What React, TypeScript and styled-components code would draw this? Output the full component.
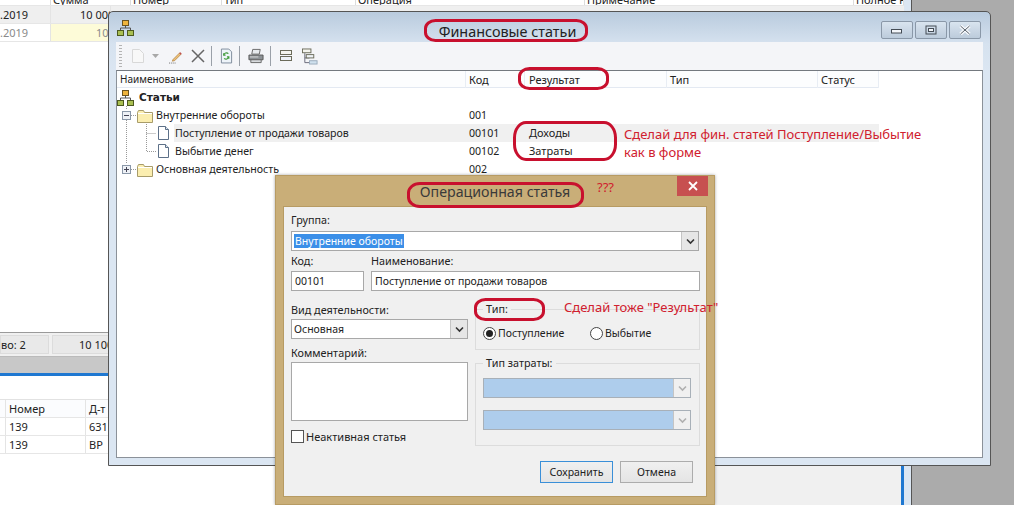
import styled, { createGlobalStyle } from "styled-components"

const GlobalStyle = createGlobalStyle`
  html, body {
    margin: 0;
    padding: 0;
    background: #ababab;
  }
  * {
    box-sizing: border-box;
  }
`

const UI_FONT = `"Noto Sans", "Open Sans", "Liberation Sans", sans-serif`
const RED = "#d0202e"

const Desktop = styled.div`
  position: relative;
  width: 1014px;
  height: 505px;
  overflow: hidden;
  background: #ababab;
  font-family: ${UI_FONT};
  font-size: 10.5px;
  color: #222;
`

/* the app behind the windows */
const BackWindow = styled.div`
  position: absolute;
  left: 0;
  top: 0;
  width: 912px;
  height: 505px;
  display: flex;
  background: #dbe6f2;
  border-right: 1px solid #555;
`

const BackContent = styled.div`
  width: 904px;
  display: flex;
  flex-direction: column;
  background: #fff;
`

const BackHeader = styled.div`
  height: 6px;
  display: flex;
  align-items: flex-end;
  overflow: hidden;
  border-bottom: 1px solid #e6e6e6;
`

const HeaderCell = styled.div<{ $w: number }>`
  flex: 0 0 ${(p) => p.$w}px;
  height: 5px;
  padding-left: 2px;
  display: flex;
  align-items: flex-end;
  font-size: 11px;
  line-height: 10px;
  white-space: nowrap;
  overflow: hidden;
  border-right: 1px solid #dcdcdc;
`

const BackCell = styled.div<{ $w: number; $bg?: string; $pad?: number; $muted?: boolean }>`
  flex: 0 0 ${(p) => p.$w}px;
  width: ${(p) => p.$w}px;
  padding-left: ${(p) => p.$pad ?? 3}px;
  line-height: 17px;
  font-size: 11px;
  white-space: nowrap;
  overflow: hidden;
  background: ${(p) => p.$bg || "transparent"};
  color: ${(p) => (p.$muted ? "#8a8a8a" : "#222")};
  border-right: 1px solid #e4e4e4;
`

const BackRow = styled.div<{ $bg?: string }>`
  height: 18px;
  display: flex;
  background: ${(p) => p.$bg || "#fff"};
  border-bottom: 1px solid #e6e6e6;
`

const BackSpacer = styled.div`
  height: 291px;
  border-bottom: 1px solid #9a9a9a;
`

const StatusStrip = styled.div`
  height: 24px;
  display: flex;
  gap: 3px;
  padding: 2px 0;
  background: #f0f0f0;
  border-bottom: 1px solid #bbb;
`

const StatusCell = styled.div<{ $w: number; $pad: number }>`
  width: ${(p) => p.$w}px;
  line-height: 18px;
  padding-left: ${(p) => p.$pad}px;
  background: #e9e9e9;
  border: 1px solid #dcdcdc;
  white-space: nowrap;
  overflow: hidden;
  font-size: 11px;
`

const GreyBar = styled.div`
  height: 19px;
  background: #c8c8c8;
  border-bottom: 3px solid #1f78d1;
`

const WhiteGap = styled.div`
  height: 24px;
  background: #fff;
  border-bottom: 1px solid #e2e2e2;
`

const LowerArea = styled.div`
  flex: 1;
  display: flex;
`

const LowerWhite = styled.div`
  width: 280px;
  background: #fff;
`

const LowerGrey = styled.div`
  flex: 1;
  background: #f0f0f0;
  border-right: 3px solid #1f78d1;
`

/* main window */
const MainWindow = styled.div`
  position: absolute;
  left: 108px;
  top: 11px;
  width: 883px;
  height: 455px;
  display: flex;
  flex-direction: column;
  padding: 0 7px 7px 7px;
  background: linear-gradient(#b9cbde 0, #d6e2ef 32px, #dbe6f2 60px);
  border: 1px solid #555;
  border-radius: 5px 5px 0 0;
  border-bottom-left-radius: 0;
`

const TitleBar = styled.div`
  position: relative;
  height: 30px;
  flex: none;
  display: flex;
  align-items: center;
  justify-content: center;
`

const AppIconSlot = styled.div`
  position: absolute;
  left: 1px;
  top: 7px;
  display: flex;
`

const WindowTitle = styled.div`
  font-size: 14.4px;
  color: #222;
  padding-top: 8px;
  padding-right: 84px;
`

const WinButtons = styled.div`
  position: absolute;
  right: 2px;
  top: 9px;
  display: flex;
  gap: 2px;
`

const WinButton = styled.div`
  flex: 0 0 32px;
  height: 18px;
  display: flex;
  align-items: center;
  justify-content: center;
  border: 1px solid #8a98a8;
  border-radius: 2px;
  background: linear-gradient(#d9e4ef, #bccbdb);
`

const Toolbar = styled.div`
  height: 28px;
  flex: none;
  display: flex;
  align-items: center;
  background: #f4f5f8;
  padding-left: 3px;
`

const Grip = styled.div`
  width: 3px;
  height: 22px;
  margin-right: 9px;
  background: repeating-linear-gradient(#b4b4b4 0 1px, transparent 1px 3px);
`

const ToolIcon = styled.div<{ $w: number; $gap?: number }>`
  width: ${(p) => p.$w}px;
  height: 18px;
  margin-right: ${(p) => p.$gap ?? 0}px;
  display: flex;
  align-items: center;
  justify-content: center;
  flex: none;
`

const ToolSep = styled.div`
  width: 1px;
  height: 20px;
  background: #9aa0a8;
  margin: 0 8px 0 6px;
  flex: none;
`

const TreePanel = styled.div`
  flex: 1;
  background: #fff;
  border: 1px solid #8b9199;
  border-top-color: #74797f;
  overflow: hidden;
`

const ColumnHeader = styled.div`
  width: 762px;
  height: 17px;
  display: grid;
  grid-template-columns: 349px 59px 142px 151px 61px;
  background: #fcfdfe;
  border-bottom: 1px solid #e3e9f2;
`

const HeadCell = styled.div`
  line-height: 17px;
  padding-left: 3px;
  font-size: 11px;
  color: #222;
  border-right: 1px solid #e8edf4;
`

const NameHead = styled(HeadCell)`
  font-size: 10px;
`

const ResultHead = styled(HeadCell)`
  padding-left: 4px;
`

const TreeRow = styled.div`
  width: 762px;
  height: 18px;
  display: grid;
  grid-template-columns: 349px 59px 142px 151px 61px;
  font-size: 10.6px;
  line-height: 18px;
`

const HighlightRow = styled(TreeRow)`
  background: linear-gradient(to right, transparent 57px, #f0f0f0 57px);
`

const NameCell = styled.div`
  display: flex;
  align-items: center;
  gap: 2px;
  white-space: nowrap;
`

const BoldName = styled.span`
  font-weight: 700;
  font-family: "DejaVu Sans", sans-serif;
  font-size: 10.5px;
  margin-left: 3px;
`

const CodeCell = styled.div`
  padding-left: 3px;
`

const ResultCell = styled.div`
  padding-left: 4px;
  font-size: 11px;
`

/* dialog */
const Dialog = styled.div`
  position: absolute;
  left: 275px;
  top: 175px;
  width: 440px;
  height: 330px;
  display: flex;
  flex-direction: column;
  background: #c9ae78;
  padding: 0 7px 7px 7px;
  box-shadow: 0 0 3px rgba(0, 0, 0, 0.35);
  border: 1px solid #b79b63;
`

const DialogTitle = styled.div`
  position: relative;
  height: 30px;
  flex: none;
  text-align: center;
  font-size: 14.2px;
  line-height: 31px;
  color: #3a3a3a;
`

const CloseBtn = styled.div`
  position: absolute;
  right: -1px;
  top: 0;
  width: 31px;
  height: 20px;
  background: #c75050;
  display: flex;
  align-items: center;
  justify-content: center;
`

const DialogBody = styled.div`
  flex: 1;
  display: flex;
  flex-direction: column;
  background: #f0f0f0;
  padding: 6px 6px 0 7px;
  border: 1px solid #b79b63;
`

const FieldLabel = styled.div`
  font-size: 10.8px;
  line-height: 14px;
  color: #222;
  white-space: nowrap;
`

const ComboBox = styled.div<{ $w?: number; $disabled?: boolean }>`
  width: ${(p) => (p.$w ? `${p.$w}px` : "100%")};
  height: 20px;
  flex: none;
  display: flex;
  background: ${(p) => (p.$disabled ? "#aecdec" : "#fff")};
  border: 1px solid ${(p) => (p.$disabled ? "#a8b0b8" : "#a8a8a8")};
`

const ComboValue = styled.div`
  flex: 1;
  line-height: 18px;
  padding-left: 2px;
  font-size: 10.5px;
`

const Selected = styled.span`
  background: #3b8fe8;
  color: #fff;
  padding: 0 1px;
`

const ComboArrow = styled.div<{ $disabled?: boolean }>`
  width: 17px;
  display: flex;
  align-items: center;
  justify-content: center;
  border-left: 1px solid #c4c4c4;
  background: ${(p) => (p.$disabled ? "#f0f0f0" : "#e6e6e6")};
`

const GroupField = styled.div`
  margin-top: 4px;
  padding-right: 1px;
`

const CodeRow = styled.div`
  display: flex;
  gap: 7px;
  margin-top: 3px;
`

const CodeField = styled.div<{ $w?: number }>`
  display: flex;
  flex-direction: column;
  gap: 3px;
  width: ${(p) => (p.$w ? `${p.$w}px` : "auto")};
  flex: ${(p) => (p.$w ? "none" : 1)};
`

const TextInput = styled.div`
  height: 20px;
  line-height: 18px;
  padding-left: 3px;
  background: #fff;
  border: 1px solid #a8a8a8;
  font-size: 10.5px;
`

const Columns = styled.div`
  display: grid;
  grid-template-columns: 177px 225px;
  column-gap: 7px;
  margin-top: 12px;
`

const LeftColumn = styled.div`
  display: flex;
  flex-direction: column;
`

const ComboGap = styled.div`
  margin-top: 2px;
`

const CommentLabel = styled(FieldLabel)`
  margin-top: 7px;
`

const RightColumn = styled.div`
  display: flex;
  flex-direction: column;
  gap: 7px;
`

const CommentBox = styled.div`
  height: 59px;
  margin-top: 2px;
  background: #fff;
  border: 1px solid #a8a8a8;
`

const CheckRow = styled.div`
  display: flex;
  align-items: center;
  gap: 2px;
  margin-top: 8px;
  font-size: 11px;
`

const CheckBox = styled.div`
  width: 13px;
  height: 13px;
  background: #fff;
  border: 1px solid #555;
`

const FieldSet = styled.fieldset<{ $h: number }>`
  margin: 0;
  padding: 0 8px 0 7px;
  height: ${(p) => p.$h}px;
  border: 1px solid #dcdcdc;
  min-width: 0;
`

const Legend = styled.legend`
  padding: 0 3px;
  font-size: 10.8px;
  line-height: 12px;
`

const RadioRow = styled.div`
  display: flex;
  align-items: center;
  margin-top: 11px;
`

const RadioItem = styled.div<{ $w: number }>`
  width: ${(p) => p.$w}px;
  display: flex;
  align-items: center;
  gap: 2px;
`

const Radio = styled.div<{ $checked?: boolean }>`
  width: 13px;
  height: 13px;
  display: flex;
  align-items: center;
  justify-content: center;
  border-radius: 50%;
  background: #fff;
  border: 1px solid #444;
  &::after {
    content: "";
    display: ${(p) => (p.$checked ? "block" : "none")};
    width: 7px;
    height: 7px;
    border-radius: 50%;
    background: #222;
  }
`

const ComboStack = styled.div`
  display: flex;
  flex-direction: column;
  gap: 12px;
  margin-top: 9px;
`

const ButtonRow = styled.div`
  display: flex;
  justify-content: flex-end;
  gap: 7px;
  margin-top: 15px;
  padding-right: 7px;
`

const DialogButton = styled.div<{ $primary?: boolean }>`
  width: 73px;
  height: 22px;
  line-height: 20px;
  text-align: center;
  font-size: 10.5px;
  background: linear-gradient(#f0f0f0, #e4e4e4);
  border: 1px solid ${(p) => (p.$primary ? "#3a8fd8" : "#acacac")};
`

/* red notes drawn over the screenshot */
const Ring = styled.div<{ $x: number; $y: number; $w: number; $h: number }>`
  position: absolute;
  left: ${(p) => p.$x}px;
  top: ${(p) => p.$y}px;
  width: ${(p) => p.$w}px;
  height: ${(p) => p.$h}px;
  border: 3px solid #c8102e;
  border-radius: ${(p) => Math.min(p.$h / 2, 13)}px / ${(p) => p.$h / 2.4}px;
  pointer-events: none;
`

const Note = styled.div<{ $x: number; $y: number }>`
  position: absolute;
  left: ${(p) => p.$x}px;
  top: ${(p) => p.$y}px;
  color: ${RED};
  font-size: 13px;
  line-height: 17px;
  white-space: nowrap;
`

const HierarchyIcon = () => (
  <svg width="17" height="17" viewBox="0 0 17 17">
    <path d="M8.5 6v3M3.5 11V9h10v2" fill="none" stroke="#555" />
    <rect x="5.5" y="1.5" width="6" height="5" fill="#efb43c" stroke="#6b5320" />
    <rect x="0.5" y="11.5" width="6" height="5" fill="#a9bf52" stroke="#4d5a20" />
    <rect x="10.5" y="11.5" width="6" height="5" fill="#a9bf52" stroke="#4d5a20" />
  </svg>
)

const Folder = () => (
  <>
    <path d="M20.5 6.5l1-2h5l1 2h8v10h-15z" fill="#fbeeb0" stroke="#a89c6a" />
    <path d="M21 7.5h14" stroke="#fff" />
  </>
)

const FolderGlyph = ({ open, last }: { open?: boolean; last?: boolean }) => (
  <svg width="37" height="18" viewBox="0 0 37 18">
    <path d={last ? "M9.5 0v4" : "M9.5 0v4M9.5 14v4"} stroke="#999" strokeDasharray="1 1" />
    <path d="M14 9.5h6" stroke="#999" strokeDasharray="1 1" />
    <rect x="5.5" y="5.5" width="8" height="8" fill="#eef1f6" stroke="#8a97a8" />
    <path d="M7 9.5h5" stroke="#445" />
    {!open && <path d="M9.5 7v5" stroke="#445" />}
    <Folder />
  </svg>
)

const DocGlyph = ({ last }: { last?: boolean }) => (
  <svg width="56" height="18" viewBox="0 0 56 18">
    <path d="M9.5 0v18" stroke="#999" strokeDasharray="1 1" />
    <path d={last ? "M29.5 0v9.5h10" : "M29.5 0v18M29.5 9.5h10"} fill="none" stroke="#999" strokeDasharray="1 1" />
    <path d="M41.5 2.5h7l3 3v10h-10z" fill="#fff" stroke="#5d7088" />
    <path d="M48.5 2.5v3h3" fill="#dce6f0" stroke="#5d7088" />
  </svg>
)

const ChevronDown = ({ color = "#333" }: { color?: string }) => (
  <svg width="9" height="7" viewBox="0 0 9 7">
    <path d="M1 1.5l3.5 3.5L8 1.5" fill="none" stroke={color} strokeWidth="1.6" />
  </svg>
)

export default function App() {
  return (
    <Desktop>
      <GlobalStyle />

      <BackWindow>
        <BackContent>
          <BackHeader>
            <HeaderCell $w={51}></HeaderCell>
            <HeaderCell $w={80}>Сумма</HeaderCell>
            <HeaderCell $w={91}>Номер</HeaderCell>
            <HeaderCell $w={134}>Тип</HeaderCell>
            <HeaderCell $w={229}>Операция</HeaderCell>
            <HeaderCell $w={269}>Примечание</HeaderCell>
            <HeaderCell $w={50}>Полное н</HeaderCell>
          </BackHeader>
          <BackRow $bg="#efefef">
            <BackCell $w={51} $pad={0}>.2019</BackCell>
            <BackCell $w={60} $pad={29}>10 000</BackCell>
          </BackRow>
          <BackRow>
            <BackCell $w={51} $pad={0} $muted>.2019</BackCell>
            <BackCell $w={60} $pad={45} $muted $bg="#fdfbd8">100</BackCell>
          </BackRow>
          <BackSpacer />
          <StatusStrip>
            <StatusCell $w={49} $pad={0}>во: 2</StatusCell>
            <StatusCell $w={70} $pad={26}>10 100</StatusCell>
          </StatusStrip>
          <GreyBar />
          <WhiteGap />
          <BackRow $bg="#fbfcfe">
            <BackCell $w={6}></BackCell>
            <BackCell $w={80}>Номер</BackCell>
            <BackCell $w={30}>Д-т</BackCell>
          </BackRow>
          <BackRow>
            <BackCell $w={6}></BackCell>
            <BackCell $w={80}>139</BackCell>
            <BackCell $w={30}>631</BackCell>
          </BackRow>
          <BackRow>
            <BackCell $w={6}></BackCell>
            <BackCell $w={80}>139</BackCell>
            <BackCell $w={30}>ВР</BackCell>
          </BackRow>
          <LowerArea>
            <LowerWhite />
            <LowerGrey />
          </LowerArea>
        </BackContent>
      </BackWindow>

      <MainWindow>
        <TitleBar>
          <AppIconSlot>
            <HierarchyIcon />
          </AppIconSlot>
          <WindowTitle>Финансовые статьи</WindowTitle>
          <WinButtons>
            <WinButton>
              <svg width="12" height="8" viewBox="0 0 12 8">
                <rect x="0.5" y="3.5" width="10" height="3.5" fill="#f3f6fa" stroke="#444c55" />
              </svg>
            </WinButton>
            <WinButton>
              <svg width="12" height="10" viewBox="0 0 12 10">
                <rect x="1" y="1" width="10" height="8" fill="none" stroke="#444c55" />
                <rect x="3.5" y="3.5" width="5" height="3" fill="#f3f6fa" stroke="#444c55" />
              </svg>
            </WinButton>
            <WinButton>
              <svg width="12" height="10" viewBox="0 0 12 10">
                <path d="M1.5 1l9 8M10.5 1l-9 8" stroke="#f5f7fa" strokeWidth="3.4" />
                <path d="M1.5 1l9 8M10.5 1l-9 8" stroke="#5a636d" strokeWidth="1" />
              </svg>
            </WinButton>
          </WinButtons>
        </TitleBar>

        <Toolbar>
          <Grip />
          <ToolIcon $w={14} $gap={6}>
            <svg width="14" height="16" viewBox="0 0 14 16">
              <path d="M1.5 1.5h7l4 4v9h-11z" fill="#f8f8f8" stroke="#d8d8d8" />
            </svg>
          </ToolIcon>
          <ToolIcon $w={8} $gap={10}>
            <svg width="7" height="4" viewBox="0 0 7 4"><path d="M0 0h7L3.5 4z" fill="#a8a8a8" /></svg>
          </ToolIcon>
          <ToolIcon $w={14} $gap={8}>
            <svg width="15" height="15" viewBox="0 0 15 15">
              <path d="M4.5 10.5l7-7 1.500 1.500-7 7-2.500 0.500z" fill="#eec27a" stroke="#a87a3a" strokeWidth="0.7" />
              <path d="M11.500 3.500l1.500 1.500" stroke="#c0504d" strokeWidth="1.800" />
              <path d="M0 14.500h7" stroke="#666" strokeDasharray="1 1" />
            </svg>
          </ToolIcon>
          <ToolIcon $w={14}>
            <svg width="14" height="14" viewBox="0 0 14 14">
              <path d="M1 1l12 12M13 1L1 13" stroke="#666" strokeWidth="1.500" />
            </svg>
          </ToolIcon>
          <ToolSep />
          <ToolIcon $w={13}>
            <svg width="14" height="18" viewBox="0 0 14 18">
              <path d="M1.5 1.5h8l3 3v12h-11z" fill="#eef4fa" stroke="#7a8898" />
              <path d="M9 6.5A3 3 0 0 0 4 8M4 6v2h2" fill="none" stroke="#3f9a3a" strokeWidth="1.3" />
              <path d="M4.5 11.5A3 3 0 0 0 9.5 10M9.5 12v-2h-2" fill="none" stroke="#3f9a3a" strokeWidth="1.3" />
            </svg>
          </ToolIcon>
          <ToolSep />
          <ToolIcon $w={16}>
            <svg width="17" height="16" viewBox="0 0 17 16">
              <path d="M5 1h8l-1 5H4z" fill="#e8ebee" stroke="#666" />
              <path d="M1 7h15v5H1z" fill="#8d9296" stroke="#555" />
              <path d="M3 12h11v3H3z" fill="#d8dbde" stroke="#666" />
              <path d="M2 9h9" stroke="#ddd" />
            </svg>
          </ToolIcon>
          <ToolSep />
          <ToolIcon $w={14} $gap={9}>
            <svg width="14" height="12" viewBox="0 0 14 12">
              <rect x="1.5" y="0.5" width="11" height="4" fill="#f4f4ee" stroke="#6b6b5a" />
              <rect x="1.5" y="6.5" width="11" height="4" fill="#eef2f7" stroke="#6b6b5a" />
            </svg>
          </ToolIcon>
          <ToolIcon $w={16}>
            <svg width="17" height="17" viewBox="0 0 17 17">
              <path d="M3 5v10h5M3 10h5" fill="none" stroke="#667" />
              <rect x="0.5" y="0.5" width="9" height="4" fill="#f4f4ee" stroke="#6b6b5a" />
              <rect x="4.5" y="6.5" width="8" height="3.5" fill="#eef2f7" stroke="#6b6b5a" />
              <rect x="8" y="13" width="8" height="3.5" fill="#cfe0ee" stroke="#9ab" />
            </svg>
          </ToolIcon>
        </Toolbar>

        <TreePanel>
          <ColumnHeader>
            <NameHead>Наименование</NameHead>
            <HeadCell>Код</HeadCell>
            <ResultHead>Результат</ResultHead>
            <HeadCell>Тип</HeadCell>
            <HeadCell>Статус</HeadCell>
          </ColumnHeader>
          <TreeRow>
            <NameCell>
              <HierarchyIcon />
              <BoldName>Статьи</BoldName>
            </NameCell>
          </TreeRow>
          <TreeRow>
            <NameCell>
              <FolderGlyph open />
              Внутренние обороты
            </NameCell>
            <CodeCell>001</CodeCell>
          </TreeRow>
          <HighlightRow>
            <NameCell>
              <DocGlyph />
              Поступление от продажи товаров
            </NameCell>
            <CodeCell>00101</CodeCell>
            <ResultCell>Доходы</ResultCell>
          </HighlightRow>
          <TreeRow>
            <NameCell>
              <DocGlyph last />
              Выбытие денег
            </NameCell>
            <CodeCell>00102</CodeCell>
            <ResultCell>Затраты</ResultCell>
          </TreeRow>
          <TreeRow>
            <NameCell>
              <FolderGlyph last />
              Основная деятельность
            </NameCell>
            <CodeCell>002</CodeCell>
          </TreeRow>
        </TreePanel>
      </MainWindow>

      <Dialog>
        <DialogTitle>
          Операционная статья
          <CloseBtn>
            <svg width="10" height="10" viewBox="0 0 10 10">
              <path d="M1 1l8 8M9 1l-8 8" stroke="#fff" strokeWidth="1.8" />
            </svg>
          </CloseBtn>
        </DialogTitle>
        <DialogBody>
          <FieldLabel>Группа:</FieldLabel>
          <GroupField>
            <ComboBox>
              <ComboValue><Selected>Внутренние обороты</Selected></ComboValue>
              <ComboArrow><ChevronDown /></ComboArrow>
            </ComboBox>
          </GroupField>
          <CodeRow>
            <CodeField $w={73}>
              <FieldLabel>Код:</FieldLabel>
              <TextInput>00101</TextInput>
            </CodeField>
            <CodeField>
              <FieldLabel>Наименование:</FieldLabel>
              <TextInput>Поступление от продажи товаров</TextInput>
            </CodeField>
          </CodeRow>
          <Columns>
            <LeftColumn>
              <FieldLabel>Вид деятельности:</FieldLabel>
              <ComboGap>
                <ComboBox $w={177}>
                  <ComboValue>Основная</ComboValue>
                  <ComboArrow><ChevronDown /></ComboArrow>
                </ComboBox>
              </ComboGap>
              <CommentLabel>Комментарий:</CommentLabel>
              <CommentBox />
              <CheckRow>
                <CheckBox />
                Неактивная статья
              </CheckRow>
            </LeftColumn>
            <RightColumn>
              <FieldSet $h={47}>
                <Legend>Тип:</Legend>
                <RadioRow>
                  <RadioItem $w={107}>
                    <Radio $checked />
                    Поступление
                  </RadioItem>
                  <RadioItem $w={90}>
                    <Radio />
                    Выбытие
                  </RadioItem>
                </RadioRow>
              </FieldSet>
              <FieldSet $h={89}>
                <Legend>Тип затраты:</Legend>
                <ComboStack>
                  <ComboBox $disabled>
                    <ComboValue />
                    <ComboArrow $disabled><ChevronDown color="#b0b0b0" /></ComboArrow>
                  </ComboBox>
                  <ComboBox $disabled>
                    <ComboValue />
                    <ComboArrow $disabled><ChevronDown color="#b0b0b0" /></ComboArrow>
                  </ComboBox>
                </ComboStack>
              </FieldSet>
            </RightColumn>
          </Columns>
          <ButtonRow>
            <DialogButton $primary>Сохранить</DialogButton>
            <DialogButton>Отмена</DialogButton>
          </ButtonRow>
        </DialogBody>
      </Dialog>

      <Ring $x={424} $y={19} $w={164} $h={23} />
      <Ring $x={518} $y={67} $w={91} $h={23} />
      <Ring $x={513} $y={121} $w={104} $h={40} />
      <Ring $x={407} $y={182} $w={177} $h={26} />
      <Ring $x={474} $y={298} $w={71} $h={23} />

      <Note $x={624} $y={126}>Сделай для фин. статей Поступление/Выбытие</Note>
      <Note $x={624} $y={144}>как в форме</Note>
      <Note $x={597} $y={179}>???</Note>
      <Note $x={564} $y={299}>Сделай тоже "Результат"</Note>
    </Desktop>
  )
}
